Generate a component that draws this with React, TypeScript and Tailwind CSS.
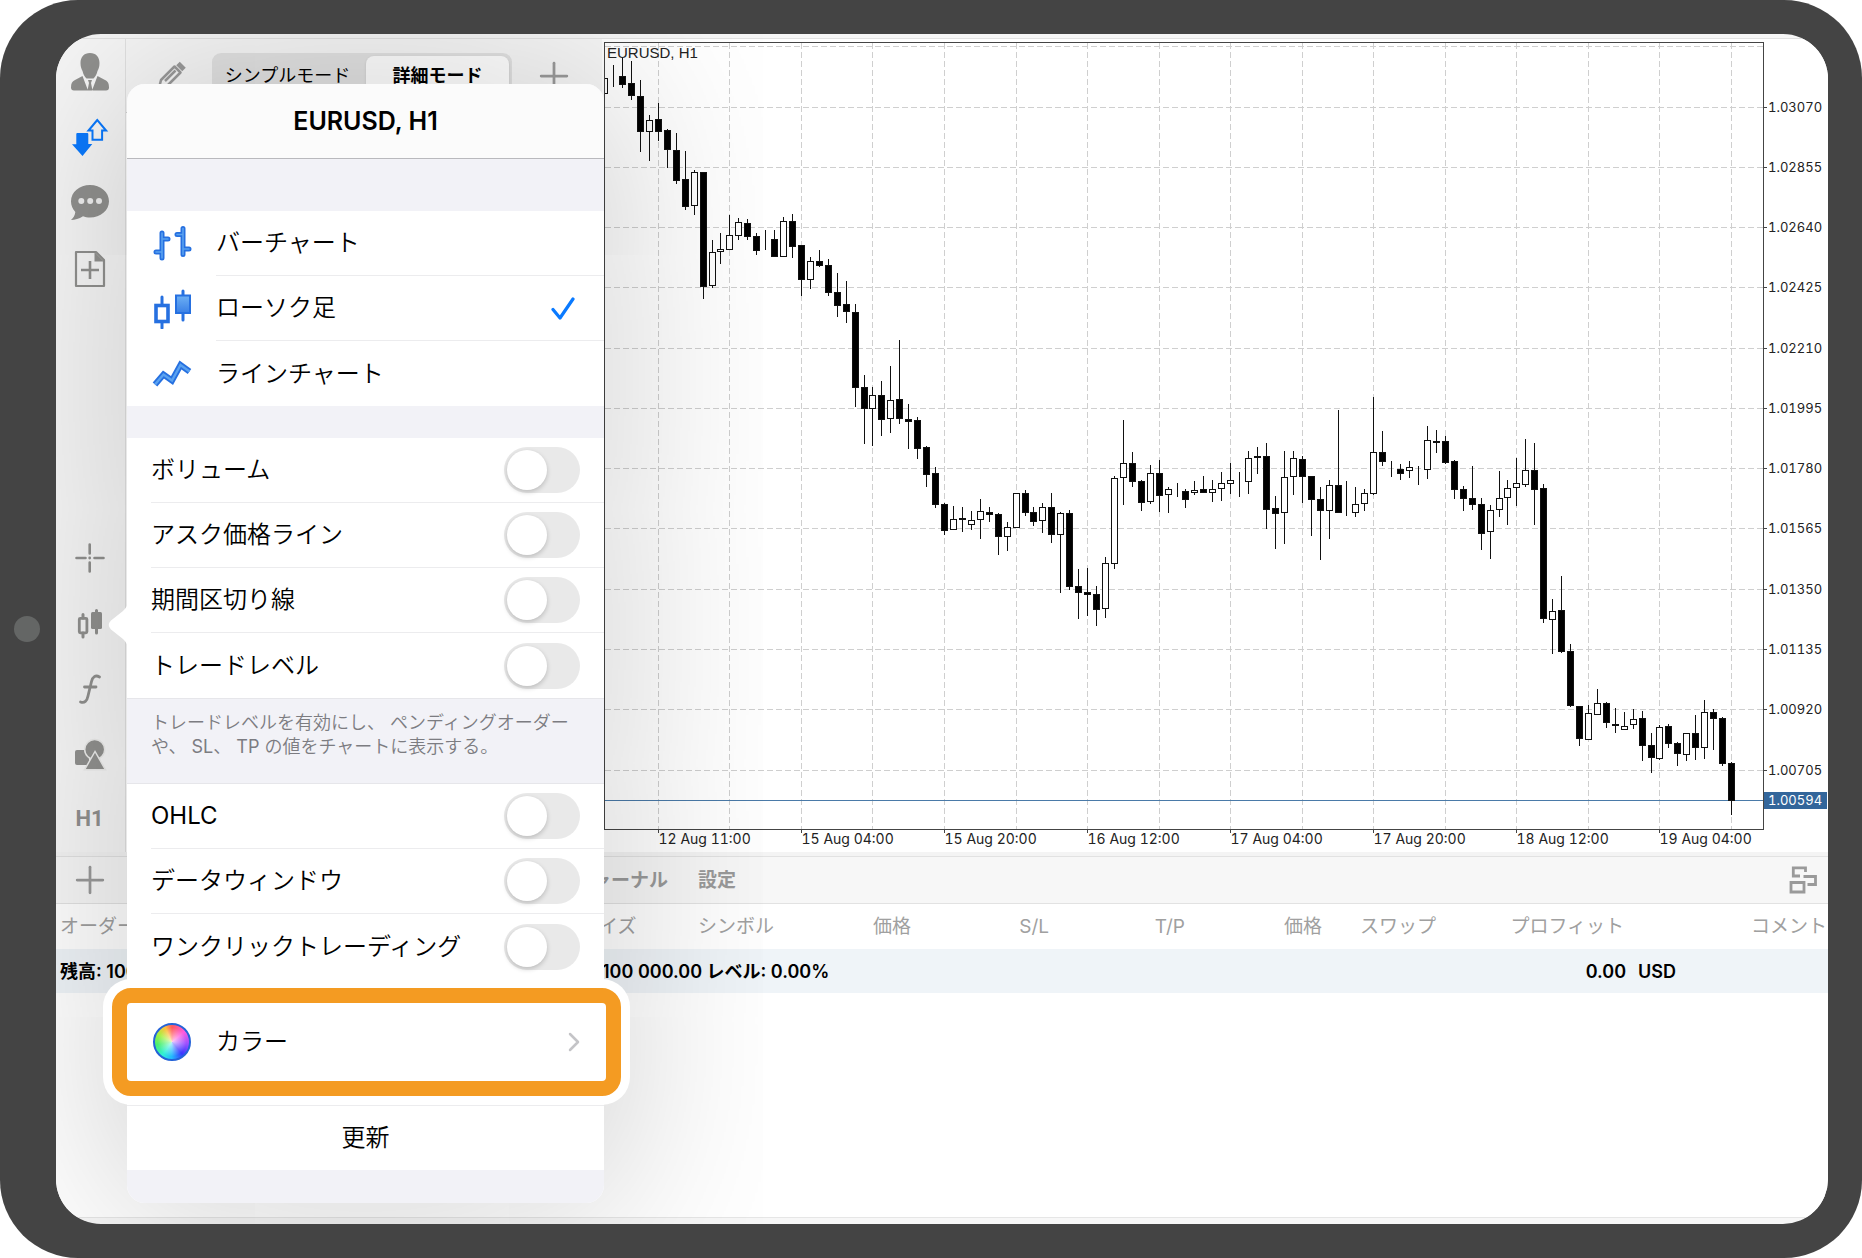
import React from "react";
import { Plus } from "lucide-react";

type Candle = [high: number, open: number, close: number, low: number];

// Vertical chart units measured down from the top of the plot frame
const CANDLES: Candle[] = [
  [36, 51, 36, 51], [23, 34, 34, 44], [16, 34, 42, 45], [19, 41, 53, 57], [38, 54, 89, 109],
  [73, 89, 78, 118], [61, 77, 89, 98], [87, 88, 107, 125], [91, 108, 138, 141], [109, 137, 164, 167],
  [128, 163, 130, 172], [130, 130, 244, 256], [198, 243, 210, 245], [191, 209, 207, 221], [173, 207, 193, 207],
  [176, 193, 180, 197], [177, 181, 194, 197], [191, 194, 208, 212], [188, 198, 198, 207], [188, 197, 214, 214],
  [175, 214, 179, 214], [172, 179, 204, 215], [203, 203, 237, 253], [215, 237, 219, 246], [208, 219, 223, 224],
  [217, 223, 250, 253], [231, 250, 263, 274], [239, 262, 269, 280], [262, 270, 345, 364], [333, 345, 366, 401],
  [345, 366, 353, 403], [339, 353, 377, 393], [324, 376, 358, 390], [298, 357, 376, 381], [362, 377, 379, 406],
  [375, 378, 406, 416], [404, 405, 432, 444], [425, 431, 462, 465], [461, 462, 488, 492], [464, 487, 477, 487],
  [465, 476, 477, 489], [469, 482, 478, 487], [457, 477, 469, 496], [465, 470, 472, 479], [471, 472, 494, 512],
  [480, 494, 485, 508], [451, 485, 451, 485], [448, 451, 470, 473], [465, 470, 479, 483], [461, 478, 465, 490],
  [451, 465, 492, 500], [470, 492, 471, 550], [468, 471, 544, 547], [527, 544, 550, 576], [526, 550, 552, 573],
  [544, 552, 567, 583], [515, 566, 521, 575], [434, 521, 436, 526], [378, 435, 421, 462], [410, 421, 439, 444],
  [438, 439, 460, 468], [423, 459, 431, 461], [418, 431, 453, 469], [445, 452, 447, 470], [441, 447, 447, 454],
  [447, 449, 457, 465], [439, 450, 448, 452], [434, 447, 450, 450], [438, 450, 447, 459], [430, 446, 441, 458],
  [421, 441, 438, 451], [430, 438, 438, 454], [409, 439, 416, 451], [405, 414, 415, 431], [401, 414, 467, 486],
  [454, 466, 471, 506], [409, 470, 435, 501], [409, 434, 416, 452], [414, 417, 434, 460], [434, 434, 457, 493],
  [445, 457, 468, 517], [438, 468, 443, 496], [368, 443, 470, 470], [439, 470, 470, 473], [445, 470, 462, 474],
  [447, 461, 451, 468], [355, 451, 410, 452], [389, 410, 419, 423], [419, 419, 419, 434], [422, 427, 431, 437],
  [419, 428, 425, 435], [424, 428, 428, 442], [384, 427, 398, 436], [388, 399, 400, 410], [394, 399, 420, 421],
  [418, 419, 447, 456], [444, 447, 456, 468], [424, 456, 462, 467], [456, 462, 491, 507], [463, 489, 468, 516],
  [429, 467, 456, 474], [438, 455, 446, 482], [416, 445, 441, 463], [397, 442, 428, 444], [401, 428, 447, 482],
  [442, 446, 576, 580], [557, 577, 569, 611], [534, 568, 609, 610], [602, 609, 663, 664], [664, 664, 696, 703],
  [663, 697, 671, 697], [647, 672, 661, 672], [660, 661, 680, 685], [666, 682, 683, 690], [670, 687, 684, 687],
  [667, 682, 677, 686], [669, 676, 703, 718], [691, 703, 715, 730], [683, 716, 685, 717], [682, 684, 701, 705],
  [700, 701, 711, 723], [691, 712, 691, 718], [673, 691, 705, 717], [658, 705, 670, 716], [667, 670, 676, 707],
  [675, 676, 721, 723], [720, 721, 758, 772],
];

const PRICES = [
  "1.03070", "1.02855", "1.02640", "1.02425", "1.02210", "1.01995",
  "1.01780", "1.01565", "1.01350", "1.01135", "1.00920", "1.00705",
];

const TIMES = [
  "12 Aug 11:00", "15 Aug 04:00", "15 Aug 20:00", "16 Aug 12:00",
  "17 Aug 04:00", "17 Aug 20:00", "18 Aug 12:00", "19 Aug 04:00",
];

const candleX = (i: number) => Math.round(2.2 + i * 8.943) + 0.5;
const priceY = (i: number) => Math.round(67.6 + i * 60.27) + 0.5;

const CandleChart: React.FC = () => (
  <svg viewBox="0 0 1226 813" className="block w-full h-auto" role="img" aria-label="EURUSD, H1">
    <g stroke="#cfcfcf" strokeWidth="1" strokeDasharray="6 3">
      {Array.from({ length: 16 }, (_, i) => (
        <line key={`v${i}`} x1={candleX(6 + i * 8)} x2={candleX(6 + i * 8)} y1="4" y2="790" />
      ))}
      {Array.from({ length: 12 }, (_, i) => (
        <line key={`h${i}`} x1="3" x2="1161" y1={priceY(i)} y2={priceY(i)} />
      ))}
      <line x1="3" x2="1161" y1="7.5" y2="7.5" />
    </g>
    <line x1="3" x2="1161" y1="761.5" y2="761.5" stroke="#4a7aa8" />
    <clipPath id="plot">
      <rect x="2" y="3" width="1160" height="788" />
    </clipPath>
    <g clipPath="url(#plot)">
      {CANDLES.map(([high, open, close, low], i) => {
        const x = candleX(i);
        const top = Math.min(open, close) + 3.5;
        const height = Math.abs(close - open);
        return (
          <g key={i} stroke="#111" strokeWidth="1">
            <line x1={x} x2={x} y1={high + 3} y2={low + 4} />
            <rect x={x - 3} y={top} width="6" height={height} fill={close > open ? "#000" : "#fff"} />
          </g>
        );
      })}
    </g>
    <rect x="2.5" y="3.5" width="1159" height="787" fill="none" stroke="#444" />
    <text x="5" y="19" fontSize="15" fill="#222" className="font-['Liberation_Sans',sans-serif]">
      EURUSD, H1
    </text>
    <g fill="#222" className="font-[Inter,sans-serif] tabular-nums">
      {PRICES.map((price, i) => (
        <g key={price} fontSize="13">
          <line x1="1162" x2="1165" y1={priceY(i)} y2={priceY(i)} stroke="#444" />
          <text x="1166" y={priceY(i) + 4.5}>{price}</text>
        </g>
      ))}
      {TIMES.map((time, i) => (
        <g key={time} fontSize="14">
          <line x1={candleX(6 + i * 16)} x2={candleX(6 + i * 16)} y1="791" y2="794" stroke="#444" />
          <text x={candleX(6 + i * 16)} y="805">{time}</text>
        </g>
      ))}
      <rect x="1162" y="753" width="63" height="17" fill="#33669b" />
      <text x="1166" y="766" fontSize="13" fill="#fff">1.00594</text>
    </g>
  </svg>
);

const Icon: React.FC<{ children: React.ReactNode }> = ({ children }) => (
  <svg viewBox="0 0 40 40" className="size-10" fill="currentColor" aria-hidden="true">
    {children}
  </svg>
);

const SideButton: React.FC<{ label: string; active?: boolean; children: React.ReactNode }> = ({
  label,
  active,
  children,
}) => (
  <button
    type="button"
    aria-label={label}
    className={`h-[62px] flex items-center justify-center ${active ? "text-[#0a7aff]" : "text-[#91918f]"}`}
  >
    {children}
  </button>
);

const Sidebar: React.FC = () => (
  <nav className="w-[70px] shrink-0 bg-[#f7f7f7] border-r border-[#e2e2e2] flex flex-col justify-between pt-px pr-0.5">
    <div className="flex flex-col gap-1">
      <SideButton label="アカウント">
        <Icon>
          <path d="M20 2c6 0 9.500 4 9.500 10 0 4-1 6-2 8-1 4-2.500 6-4 7.500h-7c-1.500-1.500-3-3.500-4-7.500-1-2-2-4-2-8C10.500 6 14 2 20 2z" />
          <path d="M12.500 25 18 39.500H4q-3 0-3-3c0-4 1-6 4-7.500zM27.500 25 22 39.500h14q3 0 3-3c0-4-1-6-4-7.500zM18 29h4l-1 3 1.500 7.500h-5L19 32z" />
        </Icon>
      </SideButton>
      <SideButton label="トレード" active>
        <Icon>
          <path d="M6.300 17q0-1 1-1h10q1 0 1 1v10h4L12.500 39 2 27.300h4.300z" />
          <path d="M27.300 3 18.500 13.500h4v9.200h9.600v-9.200h4z" fill="none" stroke="currentColor" strokeWidth="2" />
        </Icon>
      </SideButton>
      <SideButton label="チャット">
        <Icon>
          <path d="M20 2c10.500 0 19 7 19 16.300S30.500 34.500 20 34.500c-2.500 0-5-.4-7-1.200C9 36 5 37 1 37c2.500-2 4-5 4.300-8C2.500 26 1 22.500 1 18.300 1 9 9.500 2 20 2z" />
          <g fill="#f0f0f0">
            <circle cx="11.300" cy="18" r="3" />
            <circle cx="20.200" cy="18" r="3" />
            <circle cx="29" cy="18" r="3" />
          </g>
        </Icon>
      </SideButton>
      <SideButton label="新規注文">
        <Icon>
          <path d="M6 3h20l8 8v26H6z" fill="none" stroke="currentColor" strokeWidth="2.200" strokeLinejoin="round" />
          <path d="M24.500 3v9.500H34z" />
          <path d="M20 12v18M11 21h18" stroke="currentColor" strokeWidth="2.600" />
        </Icon>
      </SideButton>
    </div>
    <div className="flex flex-col gap-1">
      <SideButton label="十字カーソル">
        <Icon>
          <g stroke="currentColor" strokeWidth="2.600" strokeLinecap="round">
            <path d="M19.700 7.500v9M19.700 25.500v9M6.500 21h9M24.500 21h9" />
          </g>
          <circle cx="19.700" cy="21" r="1.400" />
        </Icon>
      </SideButton>
      <SideButton label="チャート種類">
        <Icon>
          <rect x="9.300" y="15.300" width="7.600" height="14.500" rx="1" fill="none" stroke="currentColor" strokeWidth="2.800" />
          <path d="M13 11.500V15M13 30v4M26.500 7.500V12M26.500 25v5" stroke="currentColor" strokeWidth="3" strokeLinecap="round" />
          <rect x="21" y="9" width="11" height="17" rx="1.500" />
        </Icon>
      </SideButton>
      <SideButton label="インディケータ">
        <Icon>
          <path d="M29.500 8c-4-2.500-7 0-8 4.500L18 27c-1 5-3.500 7.500-7.500 6M14.500 18h11.500" fill="none" stroke="currentColor" strokeWidth="2.800" strokeLinecap="round" />
        </Icon>
      </SideButton>
      <SideButton label="オブジェクト">
        <Icon>
          <rect x="5" y="15" width="14" height="15" rx="2" />
          <circle cx="24.700" cy="14.500" r="10" stroke="#ececeb" strokeWidth="1.500" />
          <path d="M25 16.500 14.500 34.800h21z" stroke="#ececeb" strokeWidth="1.500" />
        </Icon>
      </SideButton>
      <SideButton label="時間足">
        <span className="text-[22px] leading-6 font-bold pb-1 font-['Liberation_Sans_Narrow',Roboto,sans-serif]">H1</span>
      </SideButton>
    </div>
  </nav>
);

const QuotesPane: React.FC = () => (
  <section className="w-[476px] shrink-0 bg-white">
    <div className="h-[74px] bg-[#f7f7f7] border-b border-[#d0d0d0] flex items-center pl-[30px] text-lg leading-6">
      <button type="button" aria-label="編集" className="text-[#9b9b9b]">
        <svg viewBox="0 0 30 30" className="size-[30px]" fill="none" stroke="currentColor" aria-hidden="true">
          <path d="M3 27l2-8L18.500 5.500l6 6L11 25zM9 20 19.500 9.500" strokeWidth="2.500" strokeLinejoin="round" />
          <path d="M22 2.500l6 6" strokeWidth="5" />
        </svg>
      </button>
      <div className="ml-[26px] w-[300px] h-[46px] bg-[#e3e3e3] rounded-[9px] p-[3px] flex">
        <button type="button" className="w-[151px] pr-1.5">シンプルモード</button>
        <button type="button" className="flex-1 bg-white rounded-[8px] shadow font-bold">詳細モード</button>
      </div>
      <button type="button" aria-label="追加" className="ml-5 text-[#9b9b9b]">
        <Plus className="size-11" strokeWidth={1.5} />
      </button>
    </div>
  </section>
);

const TradePanel: React.FC = () => (
  <section className="flex-1 bg-white border-t-4 border-[#f4f4f4]">
    <div className="h-12 bg-[#f7f7f7] border-y border-[#e2e2e2] flex items-center justify-between pl-3 pr-[11px] text-[#9a9a9a]">
      <div className="flex items-center">
        <button type="button" aria-label="新規注文">
          <Plus className="size-11" strokeWidth={1.5} />
        </button>
        <div className="ml-[462px] pt-0.5 flex gap-[30px] text-[19px] leading-6 font-bold">
          <button type="button">ジャーナル</button>
          <button type="button">設定</button>
        </div>
      </div>
      <button type="button" aria-label="ウィンドウ配置">
        <svg viewBox="0 0 28 28" className="size-7" fill="none" stroke="currentColor" strokeWidth="2.800" aria-hidden="true">
          <path d="M11 10H4.300V1.800H16.500V6M14.500 10.500H26.500V18.500H18.500M2 16.500h13v9.500H2z" />
        </svg>
      </button>
    </div>
    <table className="w-full table-fixed text-[19px] leading-6 whitespace-nowrap">
      <colgroup>
        <col className="w-[524px]" />
        <col className="w-[118px]" />
        <col className="w-[127px]" />
        <col className="w-[86px]" />
        <col className="w-[138px]" />
        <col className="w-[136px]" />
        <col className="w-[137px]" />
        <col className="w-[114px]" />
        <col className="w-[190px]" />
        <col />
      </colgroup>
      <thead>
        <tr className="h-[45px] text-[#a0a0a0] *:font-normal *:p-0 *:text-right">
          <th scope="col"><span className="block text-left pl-1">オーダー</span></th>
          <th scope="col"><span className="block text-left">サイズ</span></th>
          <th scope="col"><span className="block text-left">シンボル</span></th>
          <th scope="col">価格</th>
          <th scope="col">S/L</th>
          <th scope="col">T/P</th>
          <th scope="col">価格</th>
          <th scope="col">スワップ</th>
          <th scope="col"><span className="block pr-0.5">プロフィット</span></th>
          <th scope="col"><span className="block pr-px">コメント</span></th>
        </tr>
      </thead>
      <tbody>
        <tr className="h-11 bg-[#eff4f8] *:p-0 text-lg leading-6 font-semibold text-black">
          <td><span className="block pl-1 pt-0.5">残高: 100 000.00</span></td>
          <td colSpan={7}><span className="block pl-[22px] pt-0.5">100 000.00 レベル: 0.00%</span></td>
          <td className="text-right"><span className="block pt-0.5">0.00</span></td>
          <td><span className="block pl-3 pt-0.5">USD</span></td>
        </tr>
      </tbody>
    </table>
  </section>
);

const BLUE = "#2670e0";
const LIGHT = "#5aa2f0";

const BarIcon = () => (
  <Icon>
    {[[BLUE, 5], [LIGHT, 1.6]].map(([color, width]) => (
      <path
        key={color}
        d="M10 9v25M10 15h6M4 28h6M31 4.500v26M31 10.500h-6M37 25h-6"
        fill="none"
        stroke={color}
        strokeWidth={width}
        strokeLinecap="round"
      />
    ))}
  </Icon>
);

const CandleIcon = () => (
  <Icon>
    <path d="M10 8v31M31 2v29" stroke={BLUE} strokeWidth="3" strokeLinecap="round" />
    <rect x="4" y="16.500" width="12" height="16" fill="#fff" stroke={BLUE} strokeWidth="3.600" />
    <linearGradient id="body" x1="0" y1="0" x2="0" y2="1">
      <stop offset="0" stopColor="#6db0f4" />
      <stop offset="1" stopColor="#3a80e6" />
    </linearGradient>
    <rect x="24" y="6.500" width="14" height="17.500" fill="url(#body)" stroke={BLUE} strokeWidth="2" />
  </Icon>
);

const LineIcon = () => (
  <Icon>
    {[[BLUE, 6], [LIGHT, 2.4]].map(([color, width]) => (
      <path
        key={color}
        d="M3 30.500 11.500 20.500 20 26.500 28.500 11 37.500 17.500"
        fill="none"
        stroke={color}
        strokeWidth={width}
      />
    ))}
  </Icon>
);

const CHART_TYPES = [
  { name: "バーチャート", icon: <BarIcon /> },
  { name: "ローソク足", icon: <CandleIcon />, checked: true },
  { name: "ラインチャート", icon: <LineIcon /> },
];

const Toggle: React.FC<{ name: string; last?: boolean }> = ({ name, last }) => (
  <label className="h-[65px] pl-6 flex">
    <span className={`flex-1 flex items-center justify-between pr-6 ${last ? "" : "border-b border-[#ececee]"}`}>
      {name}
      <input
        type="checkbox"
        role="switch"
        className="appearance-none w-[76px] h-[46px] rounded-full bg-[#e9e9e9] p-[3px] before:block before:size-10 before:rounded-full before:bg-white before:shadow-[0_2px_5px_rgba(0,0,0,0.2)] checked:bg-green-500 checked:before:translate-x-[30px]"
      />
    </span>
  </label>
);

const ChartSettings: React.FC = () => (
  <div
    role="dialog"
    aria-label="EURUSD, H1"
    className="absolute left-[71px] top-[50px] w-[477px] rounded-[18px] shadow-[0_0_200px_rgba(0,0,0,0.23)] text-2xl text-black font-[Inter,'Noto_Sans_CJK_JP_DemiLight','Noto_Sans_CJK_JP_Light','Noto_Sans_CJK_JP',sans-serif]"
  >
    <svg viewBox="0 0 20 48" className="absolute -left-[19px] top-[517px] w-5 h-12" fill="#fff" aria-hidden="true">
      <path d="M20 0C20 4 18 7 15 10L3 19.500Q-1.500 24 3 28.500L15 38c3 3 5 6 5 10z" />
    </svg>
    <div className="rounded-[18px] overflow-hidden bg-[#f2f2f7]">
      <h2 className="h-[75px] pt-0.5 bg-[#fbfbfb] border-b border-[#b9b9bd] flex items-center justify-center text-[25px] font-semibold">
        EURUSD, H1
      </h2>
      <fieldset className="mt-[52px] bg-white">
        {CHART_TYPES.map(({ name, icon, checked }, i) => (
          <label key={name} className="h-[65px] pl-[25px] flex items-center">
            {icon}
            <input type="radio" name="chart-type" defaultChecked={checked} className="sr-only" />
            <span
              className={`ml-6 h-full flex-1 flex items-center justify-between pr-[29px] ${i < 2 ? "border-b border-[#ececee]" : ""}`}
            >
              {name}
              {checked && (
                <svg viewBox="0 0 24 24" className="size-6" fill="none" stroke="#0a7aff" strokeWidth="3.200" aria-hidden="true">
                  <path d="M2 13.500 9 22 22 3" strokeLinecap="round" strokeLinejoin="round" />
                </svg>
              )}
            </span>
          </label>
        ))}
      </fieldset>
      <div className="mt-8 bg-white">
        <Toggle name="ボリューム" />
        <Toggle name="アスク価格ライン" />
        <Toggle name="期間区切り線" />
        <Toggle name="トレードレベル" last />
      </div>
      <p className="h-[86px] pt-[12px] pl-6 text-lg leading-6 text-[#7c7c81] border-y border-[#e6e6ea]">
        トレードレベルを有効にし、 ペンディングオーダー
        <br />
        や、 SL、 TP の値をチャートに表示する。
      </p>
      <div className="bg-white">
        <Toggle name="OHLC" />
        <Toggle name="データウィンドウ" />
        <Toggle name="ワンクリックトレーディング" last />
      </div>
      <div className="h-[126px] bg-white" />
      <button type="button" className="w-full h-[65px] bg-white border-t border-[#ececee]">
        更新
      </button>
      <div className="h-[33px]" />
    </div>
    <div className="absolute bottom-[98px] -left-6 -right-[26px] h-[126px] bg-white rounded-[28px] p-[9px]">
      <button
        type="button"
        className="w-full h-full border-[15px] border-[#f49b22] bg-[#f49b22] rounded-[19px] flex text-left"
      >
        <span className="flex-1 h-full bg-white rounded-[4px] flex items-center px-[26px]">
          <span className="size-[38px] rounded-full border-2 border-[#2463d8] bg-[radial-gradient(circle,rgba(255,255,255,0.7),transparent_60%),conic-gradient(#ff5a5a,#ff5ce0_50deg,#a050ff_95deg,#3838ff_140deg,#22b8ff_180deg,#30f0d8_215deg,#48f070_260deg,#a8f040_300deg,#ffc040_335deg,#ff5a5a)]" />
          <span className="ml-[25px] flex-1">カラー</span>
          <svg viewBox="0 0 12 20" className="w-3 h-5" fill="none" stroke="#c4c4c7" strokeWidth="2.500" aria-hidden="true">
            <path d="M2 2l8 8-8 8" strokeLinecap="round" strokeLinejoin="round" />
          </svg>
        </span>
      </button>
    </div>
  </div>
);

const App: React.FC = () => {
  return (
    <div className="bg-white font-[Inter,'Noto_Sans_CJK_JP',sans-serif]" lang="ja">
      <div className="min-h-screen bg-[#444] rounded-[78px] py-[34px] pr-[34px] flex">
        <div className="w-14 pr-0.5 flex items-center justify-center">
          <span className="size-[26px] rounded-full bg-[#646665]" />
        </div>
        <main className="relative flex-1 min-w-0 bg-[#f7f7f7] rounded-[45px] overflow-hidden flex flex-col">
          <div className="h-[5px] shrink-0 border-b border-[#e2e2e2]" />
          <div className="flex">
            <Sidebar />
            <QuotesPane />
            <div className="flex-1 min-w-0 bg-white">
              <CandleChart />
            </div>
          </div>
          <TradePanel />
          <div className="h-[7px] shrink-0 border-t border-[#e6e6e6]" />
          <ChartSettings />
        </main>
      </div>
    </div>
  );
};

export default App;
